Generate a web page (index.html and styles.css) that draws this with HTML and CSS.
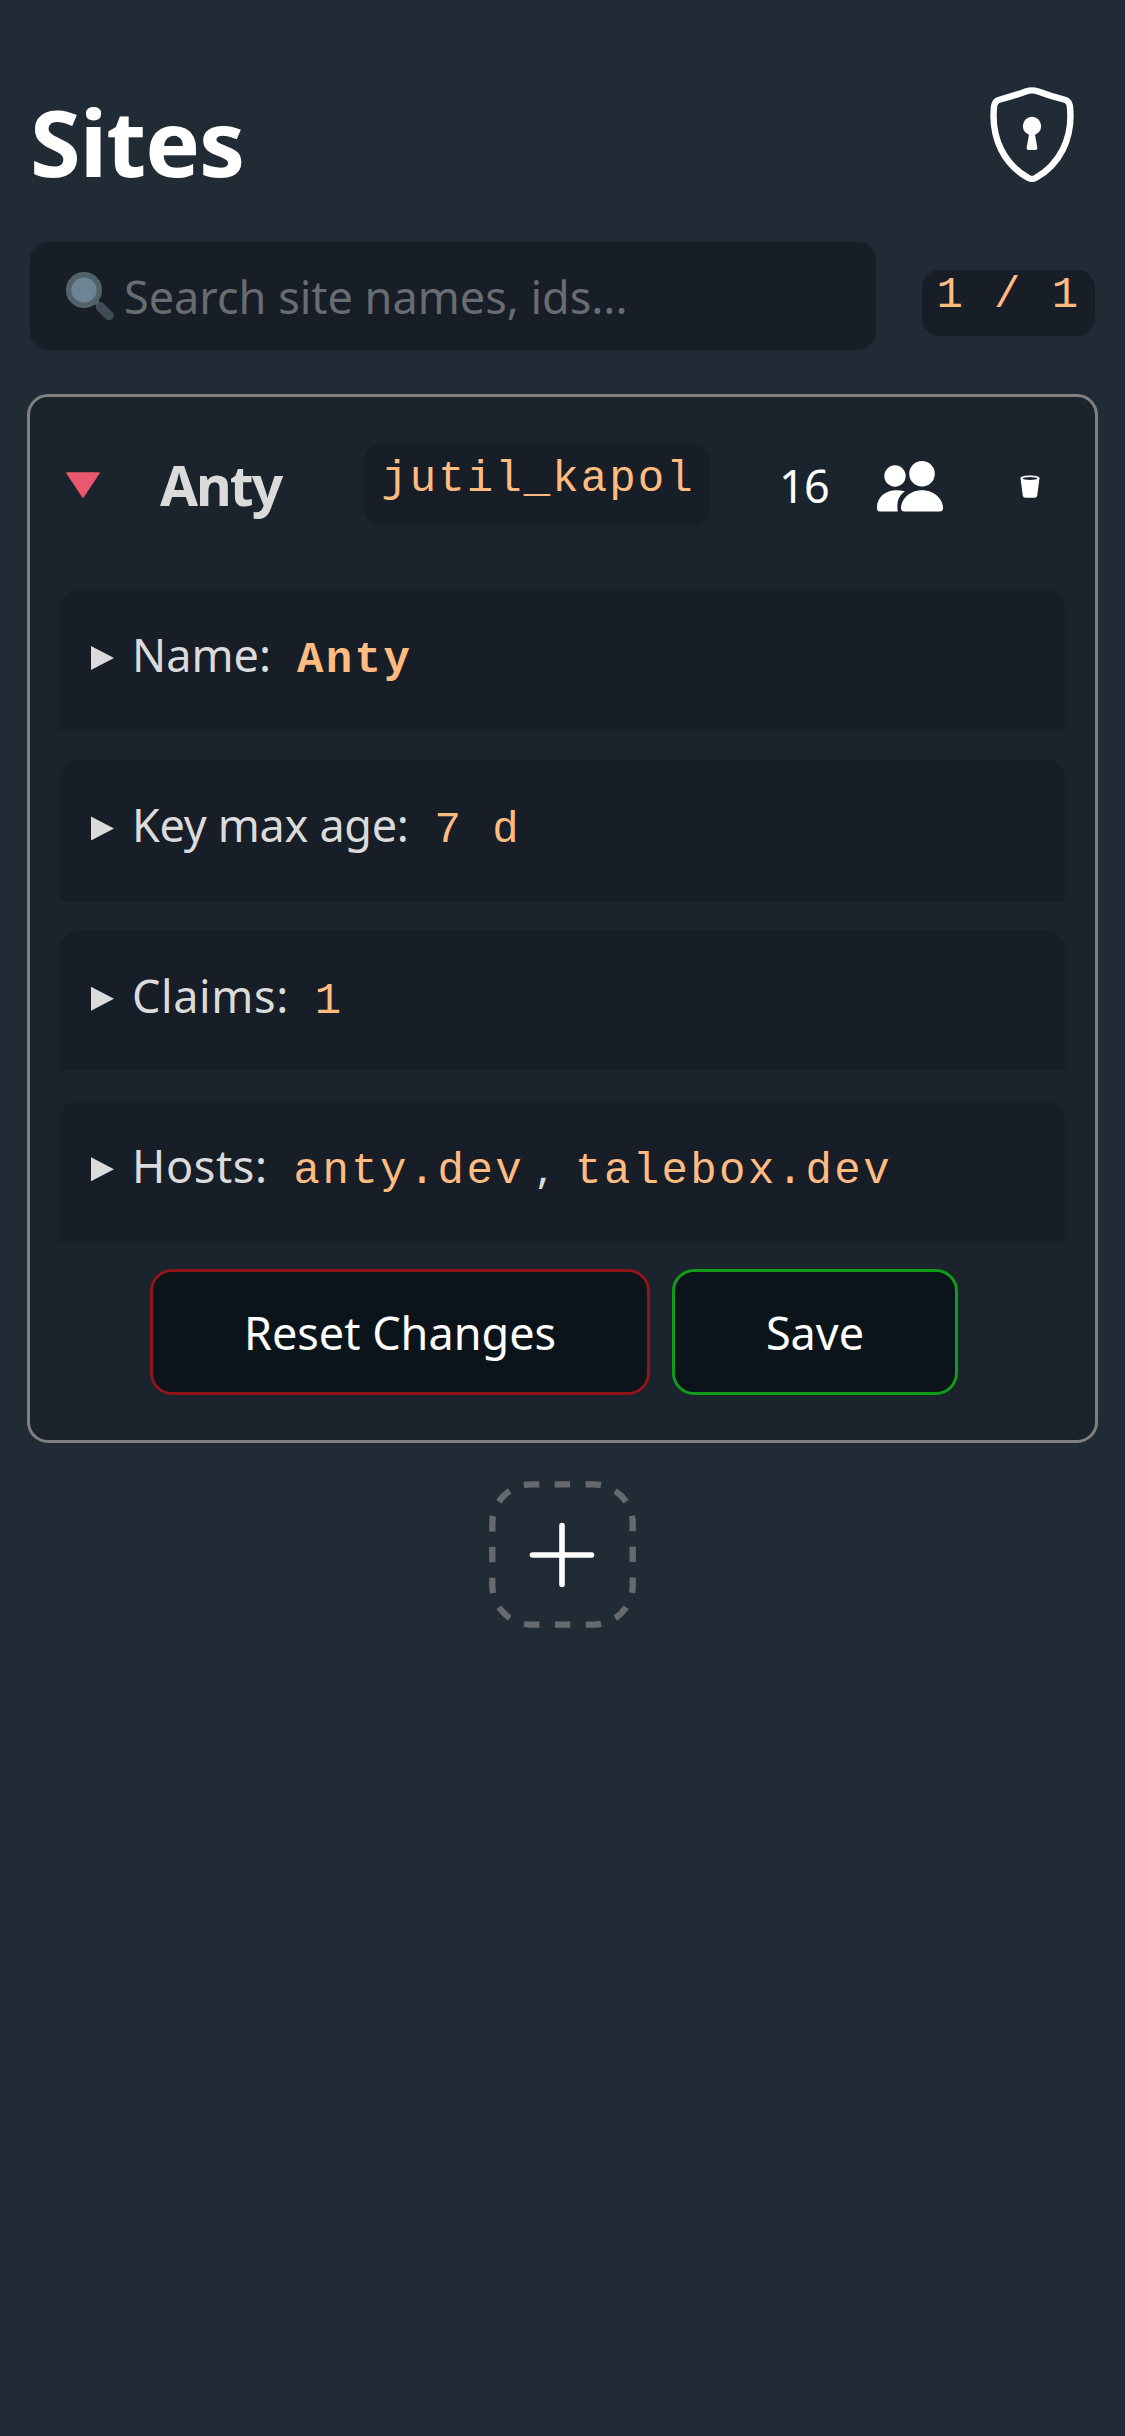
FILE: index.html
```html
<!DOCTYPE html>
<html lang="en">
<head>
<meta charset="utf-8">
<title>Sites</title>
<link rel="stylesheet" href="styles.css">
</head>
<body>
<header class="top">
  <h1 class="title">Sites</h1>
  <svg class="shield" viewBox="0 0 84 96" width="84" height="96" fill="none">
    <path d="M36.500 4.200Q42 2.500 47.500 4.200Q61 9.200 74 12.500Q79.300 14 79.900 19C83.500 52 69 78 45.500 91Q42 92.800 38.500 91C15 78 .5 52 4.100 19Q4.700 14 10 12.500Q23 9.200 36.500 4.200Z" stroke="#fff" stroke-width="6.400" stroke-linejoin="round"/>
    <circle cx="42" cy="39" r="9.200" fill="#fff"/>
    <path d="M39.500 45h5l2.800 15.500q.3 2.500-2.300 2.500h-6q-2.600 0-2.300-2.500z" fill="#fff"/>
  </svg>
</header>
<section class="filter">
  <div class="search">
    <svg class="lens" viewBox="0 0 48 48" width="48" height="48">
      <path d="M29 29l6 6" stroke="#586973" stroke-width="5"/>
      <path d="M34.500 35l8.500 8.500" stroke="#3f4c55" stroke-width="9.500" stroke-linecap="round"/>
      <circle cx="18" cy="18" r="15.300" fill="#6d8494" stroke="#52626b" stroke-width="5.500"/>
    </svg>
    <span class="hint">Search site names, ids...</span>
  </div>
  <code class="count">1 / 1</code>
</section>
<main class="card">
  <div class="card-head">
    <svg class="caret" viewBox="0 0 34 26" width="34" height="26"><path d="M1 1h32L17 25z" fill="#e9586e" stroke="#e9586e" stroke-width="1.500" stroke-linejoin="round"/></svg>
    <h2 class="name">Anty</h2>
    <code class="site-id">jutil_kapol</code>
    <span class="users">16</span>
    <svg class="people" viewBox="0 0 66 52" width="66" height="52" fill="#fff">
      <circle cx="18" cy="16" r="10.700"/>
      <circle cx="45" cy="13.800" r="12.800"/>
      <path d="M0 48C-.5 38 8 30.200 19 30.200Q24 30.200 28 31.300C21 36 19.500 43 20.800 51.500H3Q0 51.500 0 48z"/>
      <path d="M24 48C24 39 33 30.200 45 30.200S66 39 66 48Q66 51.500 62.500 51.500H27.500Q24 51.500 24 48z"/>
    </svg>
    <svg class="bin" viewBox="0 0 20 23" width="20" height="23">
      <path d="M.5 3.200C.5-.3 19.500-.3 19.500 3.200L17.200 20.500Q16.900 22.700 14.500 22.700h-9Q3.100 22.700 2.800 20.500z" fill="#fff"/>
      <ellipse cx="10" cy="3.500" rx="7.400" ry="1.500" fill="#1b242d"/>
    </svg>
  </div>
  <div class="rows">
    <div class="row"><i class="arrow"></i><span class="label">Name:</span><code class="value strong">Anty</code></div>
    <div class="row"><i class="arrow"></i><span class="label tight">Key max age:</span><code class="value">7 d</code></div>
    <div class="row"><i class="arrow"></i><span class="label loose">Claims:</span><code class="value">1</code></div>
    <div class="row"><i class="arrow"></i><span class="label loose">Hosts:</span><code class="value">anty.dev</code><span class="comma">,</span><code class="value next">talebox.dev</code></div>
  </div>
  <div class="actions">
    <button class="btn reset">Reset Changes</button>
    <button class="btn save">Save</button>
  </div>
</main>
<div class="add-line">
  <svg class="add" viewBox="0 0 147 147" width="147" height="147" fill="none">
    <rect x="3.300" y="3.300" width="140.400" height="140.400" rx="39.200" stroke="#666a6f" stroke-width="6.300" pathLength="16" stroke-dasharray=".5 .5" stroke-dashoffset=".25"/>
    <path d="M73 44.500v59M43.500 74h59" stroke="#fff" stroke-width="5.600" stroke-linecap="round"/>
  </svg>
</div>
</body>
</html>
```
FILE: styles.css
```css
* { box-sizing: border-box; }
body {
  margin: 0;
  min-height: 2436px;
  background: #202b36;
  color: #fff;
  font: 45px/60px "Noto Sans", sans-serif;
}
h1, h2 { margin: 0; }
svg { display: block; flex: none; }
code {
  font: 44px/51px "Liberation Mono", "Courier New", monospace;
  letter-spacing: 2.4px;
  color: #ffbb80;
  white-space: pre;
}
.top {
  display: flex;
  justify-content: space-between;
  align-items: flex-start;
  height: 242px;
  padding: 87px 51px 0 30px;
}
.title { font-size: 92px; line-height: 110px; font-weight: 700; letter-spacing: -1px; }
.filter { display: flex; gap: 46px; align-items: flex-start; padding: 0 30px; }
.search {
  flex: 1;
  display: flex;
  align-items: center;
  height: 108px;
  padding-left: 36px;
  border-radius: 18px;
  background: #171e27;
}
.hint { margin-left: 10px; padding-top: 2px; color: #696c70; }
.count {
  width: 173px;
  height: 66px;
  margin-top: 28px;
  border-radius: 18px;
  background: #171e27;
  line-height: 50px;
  text-align: center;
}
.card {
  height: 1049px;
  margin: 44px 27px 0;
  padding: 47px 30px 0;
  border: 3px solid #808080;
  border-radius: 21px;
  background: #1b242d;
}
.card-head { display: flex; align-items: center; height: 82px; margin-bottom: 64px; }
.caret { margin-left: 6px; }
.name {
  width: 203px;
  margin-left: 60px;
  font-size: 55px;
  line-height: 80px;
  font-weight: 700;
  letter-spacing: -2px;
  color: #dbdbdb;
}
.site-id {
  width: 346px;
  height: 82px;
  margin-left: 1px;
  padding-left: 2px;
  border-radius: 18px;
  background: #171e27;
  line-height: 70px;
  letter-spacing: 2.1px;
  text-align: center;
}
.users { width: 89px; margin-left: 69px; padding-top: 2px; letter-spacing: -0.8px; }
.people { margin-left: 9px; margin-top: 2px; }
.bin { margin-left: 77px; margin-top: 2px; }
.rows { display: grid; gap: 30px; grid-auto-rows: 140.400px; }
.row {
  display: flex;
  align-items: baseline;
  padding: 35px 0 0 31px;
  border-radius: 18px 18px 0 0;
  background: #171e27;
  color: #dbdbdb;
}
.arrow {
  width: 23px;
  height: 24px;
  margin: 21px 18px 0 0;
  align-self: flex-start;
  background: #dbdbdb;
  clip-path: polygon(0 0, 100% 50%, 0 100%);
}
.tight { letter-spacing: -0.3px; }
.loose { letter-spacing: 0.6px; }
.value { margin-left: 26px; }
.strong { font-weight: 700; }
.comma { margin-left: 13px; }
.value.next { margin-left: 26px; }
.actions { display: flex; gap: 22px; margin: 27px 0 0 90px; }
.btn {
  height: 126px;
  padding: 3px 0 0;
  border: 3px solid #8f1518;
  border-radius: 22px;
  background: #0c141b;
  color: #fff;
  font: inherit;
}
.reset { width: 500px; }
.save { width: 286px; border-color: #129a1a; }
.add-line { display: flex; justify-content: center; padding-top: 38px; }
```
